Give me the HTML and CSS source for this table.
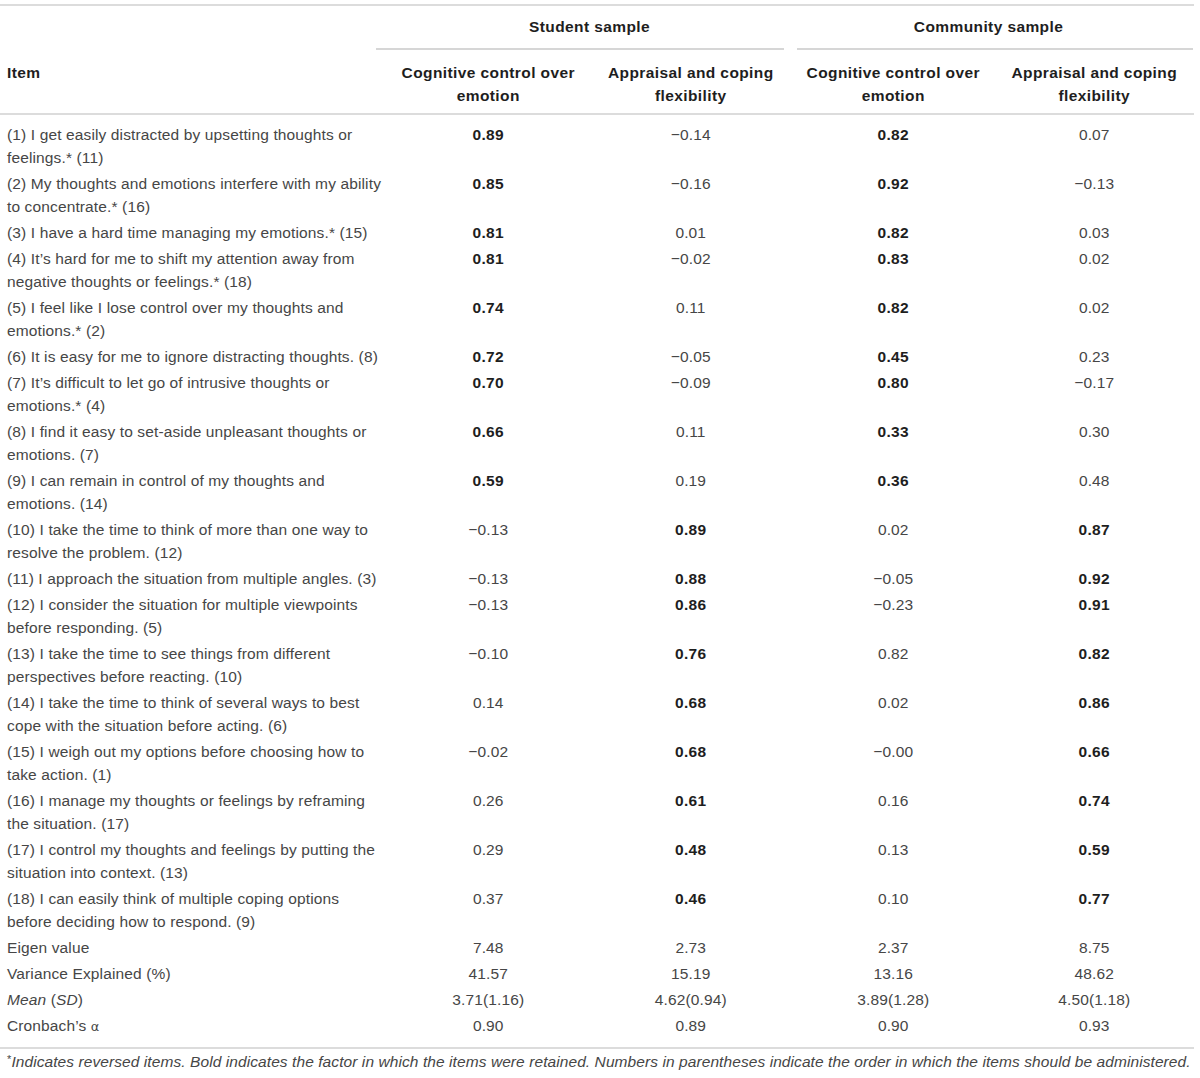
FILE: index.html
```html
<!DOCTYPE html>
<html lang="en">
<head>
<meta charset="utf-8">
<title>Factor loadings</title>
<link rel="stylesheet" href="styles.css">
</head>
<body>
<div class="page">
<table class="loadings">
  <colgroup>
    <col class="c-item">
    <col class="c-val">
    <col class="c-val">
    <col class="c-val">
    <col class="c-last">
  </colgroup>
  <thead>
    <tr class="group-row">
      <th></th>
      <th colspan="2"><div class="group group-student">Student sample</div></th>
      <th colspan="2"><div class="group group-community">Community sample</div></th>
    </tr>
    <tr class="col-row">
      <th class="item">Item</th>
      <th>Cognitive control over emotion</th>
      <th>Appraisal and coping flexibility</th>
      <th>Cognitive control over emotion</th>
      <th>Appraisal and coping flexibility</th>
    </tr>
  </thead>
  <tbody>
    <tr><td class="item">(1) I get easily distracted by upsetting thoughts or feelings.* (11)</td><td><b>0.89</b></td><td>−0.14</td><td><b>0.82</b></td><td>0.07</td></tr>
    <tr><td class="item">(2) My thoughts and emotions interfere with my ability to concentrate.* (16)</td><td><b>0.85</b></td><td>−0.16</td><td><b>0.92</b></td><td>−0.13</td></tr>
    <tr><td class="item">(3) I have a hard time managing my emotions.* (15)</td><td><b>0.81</b></td><td>0.01</td><td><b>0.82</b></td><td>0.03</td></tr>
    <tr><td class="item">(4) It’s hard for me to shift my attention away from negative thoughts or feelings.* (18)</td><td><b>0.81</b></td><td>−0.02</td><td><b>0.83</b></td><td>0.02</td></tr>
    <tr><td class="item">(5) I feel like I lose control over my thoughts and emotions.* (2)</td><td><b>0.74</b></td><td>0.11</td><td><b>0.82</b></td><td>0.02</td></tr>
    <tr><td class="item">(6) It is easy for me to ignore distracting thoughts. (8)</td><td><b>0.72</b></td><td>−0.05</td><td><b>0.45</b></td><td>0.23</td></tr>
    <tr><td class="item">(7) It’s difficult to let go of intrusive thoughts or emotions.* (4)</td><td><b>0.70</b></td><td>−0.09</td><td><b>0.80</b></td><td>−0.17</td></tr>
    <tr><td class="item">(8) I find it easy to set-aside unpleasant thoughts or emotions. (7)</td><td><b>0.66</b></td><td>0.11</td><td><b>0.33</b></td><td>0.30</td></tr>
    <tr><td class="item">(9) I can remain in control of my thoughts and emotions. (14)</td><td><b>0.59</b></td><td>0.19</td><td><b>0.36</b></td><td>0.48</td></tr>
    <tr><td class="item">(10) I take the time to think of more than one way to resolve the problem. (12)</td><td>−0.13</td><td><b>0.89</b></td><td>0.02</td><td><b>0.87</b></td></tr>
    <tr><td class="item">(11) I approach the situation from multiple angles. (3)</td><td>−0.13</td><td><b>0.88</b></td><td>−0.05</td><td><b>0.92</b></td></tr>
    <tr><td class="item">(12) I consider the situation for multiple viewpoints before responding. (5)</td><td>−0.13</td><td><b>0.86</b></td><td>−0.23</td><td><b>0.91</b></td></tr>
    <tr><td class="item">(13) I take the time to see things from different perspectives before reacting. (10)</td><td>−0.10</td><td><b>0.76</b></td><td>0.82</td><td><b>0.82</b></td></tr>
    <tr><td class="item">(14) I take the time to think of several ways to best cope with the situation before acting. (6)</td><td>0.14</td><td><b>0.68</b></td><td>0.02</td><td><b>0.86</b></td></tr>
    <tr><td class="item">(15) I weigh out my options before choosing how to take action. (1)</td><td>−0.02</td><td><b>0.68</b></td><td>−0.00</td><td><b>0.66</b></td></tr>
    <tr><td class="item">(16) I manage my thoughts or feelings by reframing the situation. (17)</td><td>0.26</td><td><b>0.61</b></td><td>0.16</td><td><b>0.74</b></td></tr>
    <tr><td class="item">(17) I control my thoughts and feelings by putting the situation into context. (13)</td><td>0.29</td><td><b>0.48</b></td><td>0.13</td><td><b>0.59</b></td></tr>
    <tr><td class="item">(18) I can easily think of multiple coping options before deciding how to respond. (9)</td><td>0.37</td><td><b>0.46</b></td><td>0.10</td><td><b>0.77</b></td></tr>
    <tr><td class="item">Eigen value</td><td>7.48</td><td>2.73</td><td>2.37</td><td>8.75</td></tr>
    <tr><td class="item">Variance Explained (%)</td><td>41.57</td><td>15.19</td><td>13.16</td><td>48.62</td></tr>
    <tr><td class="item"><i>Mean</i> (<i>SD</i>)</td><td>3.71(1.16)</td><td>4.62(0.94)</td><td>3.89(1.28)</td><td>4.50(1.18)</td></tr>
    <tr class="last"><td class="item">Cronbach’s <span class="greek">α</span></td><td>0.90</td><td>0.89</td><td>0.90</td><td>0.93</td></tr>
  </tbody>
</table>
<p class="note"><sup>*</sup><i>Indicates reversed items. Bold indicates the factor in which the items were retained. Numbers in parentheses indicate the order in which the items should be administered.</i></p>
</div>
</body>
</html>
```

FILE: styles.css
```css
html, body {
  margin: 0;
  padding: 0;
  background: #ffffff;
}

body {
  font-family: "Liberation Sans", Arial, Helvetica, sans-serif;
  font-size: 15.5px;
  color: #464646;
}

.page {
  padding-top: 4px;
  width: 1200px;
}

.loadings {
  width: 1194px;
  table-layout: fixed;
  border-collapse: collapse;
  border-top: 2px solid #dcdcdc;
  line-height: 23px;
}

.c-item { width: 387px; }
.c-val { width: 202.5px; }
.c-last { width: 199.5px; }

.loadings th,
.loadings td {
  padding: 0;
  vertical-align: top;
  text-align: center;
}

.loadings th {
  font-weight: bold;
  color: #1e1e1e;
  letter-spacing: 0.4px;
}

.group {
  padding: 9px 0 10px;
  border-bottom: 2px solid #d6d6d6;
}

.group-student {
  margin: 0 8px 0 -11px;
  padding-left: 19px;
}

.group-community {
  margin: 0 1px 0 5px;
  padding-right: 13px;
}

.col-row th {
  padding: 11px 12px 6px;
  border-bottom: 2px solid #dcdcdc;
}

.loadings td {
  padding-top: 1.5px;
  padding-bottom: 1.5px;
  letter-spacing: 0.13px;
}

.loadings .item {
  text-align: left;
  padding-left: 7px;
  padding-right: 3px;
}

.loadings tbody tr:first-child td {
  padding-top: 7.5px;
}

.loadings tr.last td {
  padding-bottom: 9.5px;
  border-bottom: 2px solid #dcdcdc;
}

.loadings b {
  font-weight: bold;
  color: #1e1e1e;
  letter-spacing: 0.3px;
}

.greek {
  font-family: "DejaVu Sans", sans-serif;
  font-size: 13px;
}

.note {
  margin: 3px 0 0;
  padding-left: 7px;
  font-size: 15.5px;
  line-height: 20px;
  letter-spacing: 0.08px;
  color: #464646;
}

.note sup {
  font-size: 11px;
  vertical-align: 4px;
  line-height: 0;
}
```
